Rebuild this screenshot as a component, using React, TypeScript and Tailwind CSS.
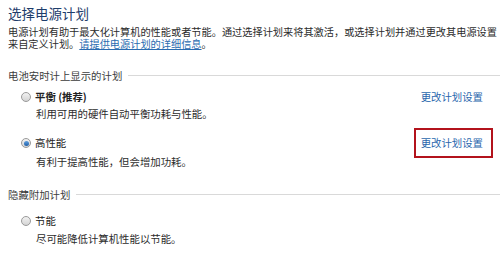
import React from "react";

function Radio({ checked }: { checked?: boolean }) {
    return (
        <span className="w-[10px] h-[10px] rounded-full border border-[#9a9a9a] bg-gradient-to-b from-[#f2f2f2] to-[#d4d4d4] flex items-center justify-center shrink-0">
            {checked && <span className="w-[5px] h-[5px] rounded-full bg-gradient-to-b from-[#5fa0e0] to-[#1f5fa8]" />}
        </span>
    );
}

function SectionHeader({ label }: { label: string }) {
    return (
        <div className="flex items-center gap-[6px] h-[12px] leading-[12px] text-[#3c3c3c]">
            <span className="whitespace-nowrap">{label}</span>
            <span className="flex-1 h-px bg-[#d9d9d9] mt-[-1px]" />
        </div>
    );
}

function Plan({
    label,
    desc,
    checked,
    bold,
    link,
    boxed,
    gap,
}: {
    label: string;
    desc: string;
    checked?: boolean;
    bold?: boolean;
    link?: string;
    boxed?: boolean;
    gap: string;
}) {
    return (
        <div>
            <div className="flex items-center justify-between h-[12px] leading-[12px] pr-[17px]">
                <div className="flex items-center gap-[4px] pl-[13px]">
                    <Radio checked={checked} />
                    <span className={bold ? "font-bold text-[#222]" : "text-[#222]"}>{label}</span>
                </div>
                {link &&
                    (boxed ? (
                        <span className="text-[#2a67ad] border-2 border-[#b3131c] pl-[5px] pr-[8px] py-[7px] mr-[-10px] leading-[12px]">
                            {link}
                        </span>
                    ) : (
                        <span className="text-[#2a67ad]">{link}</span>
                    ))}
            </div>
            <div className={`pl-[28px] leading-[12px] text-[#2c2c2c] ${gap}`}>{desc}</div>
        </div>
    );
}

export default function App() {
    return (
        <div
            className="w-[500px] h-[253px] bg-white overflow-hidden pl-2 pt-[4px] text-[10.4px]"
            style={{ fontFamily: '"Noto Sans CJK SC", "Noto Sans", sans-serif' }}
        >
            <div className="text-[13.5px] leading-[18px] h-[18px] text-[#1e3d6b]">选择电源计划</div>

            <div className="mt-[4px] leading-[12px] text-[10.2px] text-[#2c2c2c]">
                <div className="whitespace-nowrap">
                    电源计划有助于最大化计算机的性能或者节能。通过选择计划来将其激活，或选择计划并通过更改其电源设置
                </div>
                <div className="whitespace-nowrap">
                    来自定义计划。<span className="text-[#2a6bb0] underline">请提供电源计划的详细信息</span>。
                </div>
            </div>

            <div className="mt-[20px]">
                <SectionHeader label="电池安时计上显示的计划" />
            </div>

            <div className="mt-[9px]">
                <Plan label="平衡 (推荐)" bold desc="利用可用的硬件自动平衡功耗与性能。" link="更改计划设置" gap="mt-[5px]" />
            </div>

            <div className="mt-[17px]">
                <Plan label="高性能" checked desc="有利于提高性能，但会增加功耗。" link="更改计划设置" boxed gap="mt-[7px]" />
            </div>

            <div className="mt-[21px]">
                <SectionHeader label="隐藏附加计划" />
            </div>

            <div className="mt-[14px]">
                <Plan label="节能" desc="尽可能降低计算机性能以节能。" gap="mt-[6px]" />
            </div>
        </div>
    );
}
